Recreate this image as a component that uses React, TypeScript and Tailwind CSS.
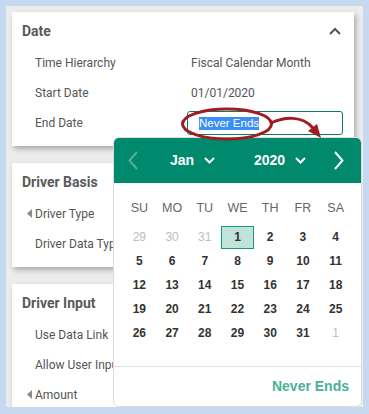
import React from "react";

const weekdays = ["SU", "MO", "TU", "WE", "TH", "FR", "SA"];
type Day = { n: number; out?: boolean; sel?: boolean };
const days: Day[] = [
  { n: 29, out: true }, { n: 30, out: true }, { n: 31, out: true }, { n: 1, sel: true },
  ...Array.from({ length: 31 - 1 }, (_, i) => ({ n: i + 2 })),
  { n: 1, out: true },
];

function Row({ label, value, tri, children }: { label: string; value?: string; tri?: boolean; children?: React.ReactNode }) {
  return (
    <div className="flex items-center h-[30px] relative">
      <div className="w-[179px] pl-[23px] relative text-[12px] text-[#555] whitespace-nowrap">
        {tri && (
          <svg className="absolute left-[15px] top-[4px]" width="5" height="9" viewBox="0 0 5 9">
            <path d="M5 0 L0 4.5 L5 9 Z" fill="#8a8a8a" />
          </svg>
        )}
        {label}
      </div>
      {value && <div className="text-[12px] text-[#555] whitespace-nowrap">{value}</div>}
      {children}
    </div>
  );
}

function Card({ title, h, chevron, children }: { title: string; h: string; chevron?: boolean; children: React.ReactNode }) {
  return (
    <div className={`bg-white w-[342px] ${h} shrink-0 shadow-[2px_3px_5px_rgba(0,0,0,0.28)] pt-[9px]`}>
      <div className="flex items-center justify-between h-[20px] pl-[10px] pr-[13px]">
        <div className="text-[14px] font-bold text-[#5a5a5a]">{title}</div>
        {chevron && (
          <svg width="12" height="8" viewBox="0 0 12 8">
            <path d="M1 7 L6 2 L11 7" fill="none" stroke="#555" strokeWidth="2" />
          </svg>
        )}
      </div>
      <div className="mt-[7px]">{children}</div>
    </div>
  );
}

export default function App() {
  return (
    <div className="w-[369px] h-[414px] bg-[#c6d9f1] relative overflow-hidden" style={{ fontFamily: "Roboto, 'Liberation Sans', sans-serif" }}>
      <div className="absolute left-[6px] top-[6px] w-[357px] h-[401px] bg-[#ececec] overflow-hidden pl-[6px] pt-[6px] flex flex-col gap-[17px]">
        <Card title="Date" h="h-[134px]" chevron>
          <Row label="Time Hierarchy" value="Fiscal Calendar Month" />
          <Row label="Start Date" value="01/01/2020" />
          <Row label="End Date">
            <div className="ml-[-4px] w-[156px] h-[24px] border border-[#0d7a5e] rounded-[3px] flex items-center pl-[11px]" style={{ fontFamily: "'Liberation Sans', Arial, sans-serif" }}>
              <span className="bg-[#3b8ef5] text-white text-[11.5px] leading-[13px]">Never Ends</span>
            </div>
          </Row>
        </Card>
        <Card title="Driver Basis" h="h-[104px]">
          <Row label="Driver Type" tri />
          <Row label="Driver Data Type" />
        </Card>
        <Card title="Driver Input" h="h-[140px]">
          <Row label="Use Data Link" />
          <Row label="Allow User Input" />
          <Row label="Amount" tri />
        </Card>
      </div>

      {/* date picker popup */}
      <div className="absolute left-[113px] top-[137px] w-[249px] h-[270px] bg-white border border-[#dcdcdc] rounded-[6px] overflow-hidden flex flex-col" style={{ fontFamily: "'Liberation Sans', Arial, sans-serif" }}>
        <div className="h-[46px] bg-[#00896c] flex items-center relative shrink-0 mt-[-1px] mx-[-1px]">
          <svg className="absolute left-[15px] top-[14px]" width="10" height="19" viewBox="0 0 10 19">
            <path d="M9 1 L1.5 9.5 L9 18" fill="none" stroke="#57ad98" strokeWidth="2" />
          </svg>
          <div className="absolute left-[57px] top-[14px] flex items-center gap-[10px]">
            <span className="text-white font-bold text-[14px] leading-[18px]">Jan</span>
            <svg width="11" height="7" viewBox="0 0 11 7">
              <path d="M1 1 L5.5 5.5 L10 1" fill="none" stroke="white" strokeWidth="2" />
            </svg>
          </div>
          <div className="absolute left-[141px] top-[14px] flex items-center gap-[10px]">
            <span className="text-white font-bold text-[14px] leading-[18px]">2020</span>
            <svg width="11" height="7" viewBox="0 0 11 7">
              <path d="M1 1 L5.5 5.5 L10 1" fill="none" stroke="white" strokeWidth="2" />
            </svg>
          </div>
          <svg className="absolute left-[221px] top-[14px]" width="10" height="19" viewBox="0 0 10 19">
            <path d="M1 1 L8.5 9.5 L1 18" fill="none" stroke="white" strokeWidth="2" />
          </svg>
        </div>
        <div className="px-[9px] pt-[15px]">
          <div className="grid grid-cols-7 h-[20px] items-center">
            {weekdays.map((w) => (
              <div key={w} className="text-center text-[12.5px] text-[#666]">{w}</div>
            ))}
          </div>
          <div className="grid grid-cols-7 mt-[7px]">
            {days.map((d, i) => (
              <div key={i} className="h-[24px] flex items-center justify-center">
                {d.sel ? (
                  <div className="w-full h-[23px] bg-[#c0e3da] border border-[#169a7b] flex items-center justify-center text-[12px] font-bold text-[#333]">
                    {d.n}
                  </div>
                ) : (
                  <span className={`text-[12px] font-bold ${d.out ? "text-[#bdbdbd] font-normal" : "text-[#333]"}`}>{d.n}</span>
                )}
              </div>
            ))}
          </div>
        </div>
        <div className="mt-[21px] border-t border-[#dedede] flex-1 flex items-center justify-end pr-[12px]">
          <span className="text-[14px] font-bold text-[#4caf98]">Never Ends</span>
        </div>
      </div>

      {/* annotation */}
      <svg className="absolute left-0 top-0 pointer-events-none" width="369" height="414" viewBox="0 0 369 414">
        <ellipse cx="227" cy="124" rx="44.5" ry="15" fill="none" stroke="#a01b22" strokeWidth="3" />
        <path d="M271 123 C 284 117, 302 115, 313 128" fill="none" stroke="#a01b22" strokeWidth="3" />
        <path d="M317 124 L308 131 L321 138 Z" fill="#a01b22" />
      </svg>
    </div>
  );
}
